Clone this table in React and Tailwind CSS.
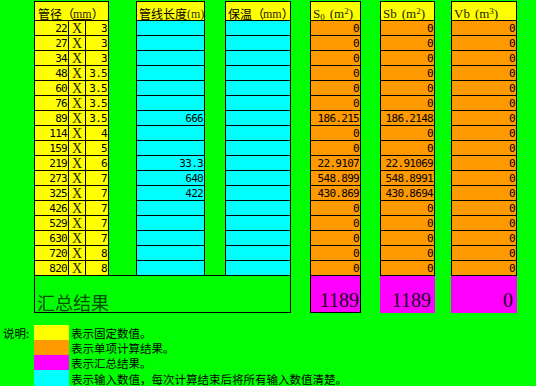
import React from 'react';

const cjk = "font-['Noto_Sans_CJK_SC',sans-serif]";
const mono = "font-['DejaVu_Sans_Mono',monospace] text-[11px] tracking-[-0.7px]";
const serif = "font-['Liberation_Serif',serif]";

const rows = [
  ['22', '3', '', '0', '0', '0'],
  ['27', '3', '', '0', '0', '0'],
  ['34', '3', '', '0', '0', '0'],
  ['48', '3.5', '', '0', '0', '0'],
  ['60', '3.5', '', '0', '0', '0'],
  ['76', '3.5', '', '0', '0', '0'],
  ['89', '3.5', '666', '186.215', '186.2148', '0'],
  ['114', '4', '', '0', '0', '0'],
  ['159', '5', '', '0', '0', '0'],
  ['219', '6', '33.3', '22.9107', '22.91069', '0'],
  ['273', '7', '640', '548.899', '548.8991', '0'],
  ['325', '7', '422', '430.869', '430.8694', '0'],
  ['426', '7', '', '0', '0', '0'],
  ['529', '7', '', '0', '0', '0'],
  ['630', '7', '', '0', '0', '0'],
  ['720', '8', '', '0', '0', '0'],
  ['820', '8', '', '0', '0', '0'],
];

const legend = [
  { color: 'bg-[#ffff00]', text: '表示固定数值。' },
  { color: 'bg-[#ff9900]', text: '表示单项计算结果。' },
  { color: 'bg-[#ff00ff]', text: '表示汇总结果。' },
  { color: 'bg-[#00ffff]', text: '表示输入数值，每次计算结束后将所有输入数值清楚。' },
];

const HeaderCell = ({ children }) => (
  <div className="h-[19px] border-b border-black bg-[#ffff00] flex items-end pl-[2px] leading-none text-black whitespace-nowrap">
    {children}
  </div>
);

const DataColumn = ({ width, ml, header, bg, index }) => (
  <div className={`${width} ${ml} border-t border-l border-r border-black`}>
    <HeaderCell>{header}</HeaderCell>
    {rows.map((r, i) => (
      <div
        key={i}
        className={`h-[15px] border-b border-black ${bg} flex items-end justify-end pr-[1px] pb-[1px] leading-none text-black ${mono}`}
      >
        {r[index]}
      </div>
    ))}
  </div>
);

const Unit = ({ sub, sup, name }) => (
  <span className={`${serif} text-[13px] text-[#222200]`}>
    {name}
    {sub && <sub className="text-[9px]">{sub}</sub>}
    <span className="ml-[5px]">(m</span>
    <sup className="text-[9px]">{sup}</sup>)
  </span>
);

const Paren = ({ children }) => (
  <span className={`${cjk} text-[12px] tracking-[-1px]`}>{children}</span>
);

export default function App() {
  return (
    <div className="w-[536px] h-[386px] bg-[#00ff00] overflow-hidden">
      {/* table body */}
      <div className="flex items-start pt-[1px] pl-[34px]">
        <div className="w-[75px] border-t border-l border-black bg-[#ffff00]">
          <div className="h-[19px] border-b border-r border-black flex items-end pl-[3px] leading-none whitespace-nowrap">
            <span className={`${cjk} text-[12px]`}>管径</span>
            <Paren>（</Paren>
            <span className={`${serif} text-[12px] underline text-[#331a00]`}>mm</span>
            <Paren>）</Paren>
          </div>
          {rows.map((r, i) => (
            <div key={i} className="flex h-[15px] border-b border-black">
              <div className={`w-[34px] border-r border-black flex items-end justify-end pr-[1px] pb-[1px] leading-none ${mono}`}>
                {r[0]}
              </div>
              <div className={`w-[17px] border-r border-black flex items-start justify-center pt-[1px] leading-none ${serif} text-[14px] text-[#222200]`}>
                X
              </div>
              <div className={`w-[23px] border-r border-black flex items-end justify-end pr-[1px] pb-[1px] leading-none ${mono}`}>
                {r[1]}
              </div>
            </div>
          ))}
        </div>

        <DataColumn
          width="w-[69px]"
          ml="ml-[27px]"
          bg="bg-[#00ffff]"
          index={2}
          header={
            <>
              <span className={`${cjk} text-[12px]`}>管线长度</span>
              <span className={`${serif} text-[12px] text-[#333300]`}>(m)</span>
            </>
          }
        />
        <DataColumn
          width="w-[66px]"
          ml="ml-[20px]"
          bg="bg-[#00ffff]"
          index={-1}
          header={
            <>
              <span className={`${cjk} text-[12px]`}>保温</span>
              <Paren>（</Paren>
              <span className={`${serif} text-[12px] text-[#331a00]`}>mm</span>
              <Paren>）</Paren>
            </>
          }
        />
        <DataColumn width="w-[51px]" ml="ml-[19px]" bg="bg-[#ff9900]" index={3} header={<Unit name="S" sub="0" sup="2" />} />
        <DataColumn width="w-[55px]" ml="ml-[19px]" bg="bg-[#ff9900]" index={4} header={<Unit name="Sb" sup="2" />} />
        <DataColumn width="w-[66px]" ml="ml-[16px]" bg="bg-[#ff9900]" index={5} header={<Unit name="Vb" sup="3" />} />
      </div>

      {/* summary row */}
      <div className="flex items-start -mt-px pl-[34px]">
        <div className="w-[257px] h-[38px] border border-black flex items-end pl-[2px] pb-[1px] leading-none">
          <span className={`${cjk} text-[18px] text-[#004f00]`}>汇总结果</span>
        </div>
        <div className={`ml-[19px] w-[51px] h-[38px] border border-black bg-[#ff00ff] flex items-end justify-end pr-[1px] pb-[2px] leading-none ${serif} text-[20px] text-[#1a001a]`}>
          1189
        </div>
        <div className={`ml-[19px] mt-px w-[55px] h-[37px] bg-[#ff00ff] flex items-end justify-end pr-[4px] pb-[3px] leading-none ${serif} text-[20px] text-[#1a001a]`}>
          1189
        </div>
        <div className={`ml-[16px] mt-px w-[66px] h-[37px] bg-[#ff00ff] flex items-end justify-end pr-[4px] pb-[3px] leading-none ${serif} text-[20px] text-[#1a001a]`}>
          0
        </div>
      </div>

      {/* legend */}
      <div className="mt-[12px]">
        {legend.map((l, i) => (
          <div key={i} className={`flex ${i === 3 ? 'h-[16px]' : 'h-[15px]'}`}>
            <div className={`w-[34px] flex items-end pl-[3px] pb-[1px] leading-[12px] ${cjk} text-[11.5px] text-black whitespace-nowrap`}>
              {i === 0 ? '说明:' : ''}
            </div>
            <div className={`w-[35px] ${l.color}`} />
            <div className={`flex items-end pl-[2px] pb-[1px] leading-[12px] ${cjk} text-[11.5px] text-black whitespace-nowrap`}>
              {l.text}
            </div>
          </div>
        ))}
      </div>
    </div>
  );
}
